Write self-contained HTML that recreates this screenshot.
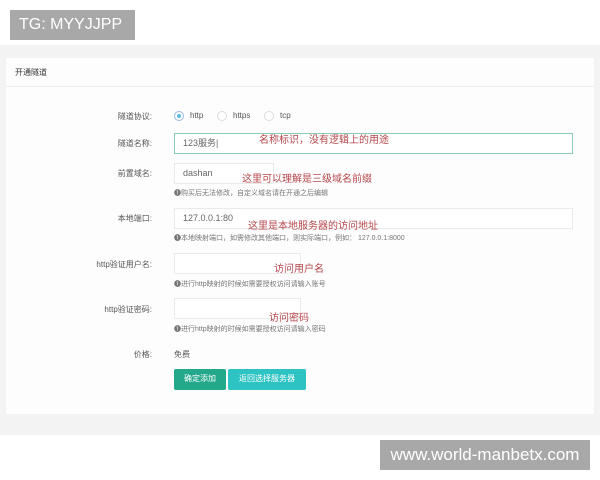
<!DOCTYPE html>
<html><head><meta charset="utf-8"><style>
*{margin:0;padding:0;box-sizing:border-box}
body{width:600px;height:480px;background:#fff;position:relative;overflow:hidden;font-family:"Liberation Sans","Noto Sans CJK SC",sans-serif;color:#555}
.a{position:absolute;white-space:nowrap}
.band{left:0;top:45px;width:600px;height:390px;background:#f3f3f3}
.panel{left:6px;top:58px;width:588px;height:356px;background:#fdfdfd}
.lbl{font-size:8px;color:#555;text-align:right;width:120px;left:32px}
.in{border:1px solid #eaeaea;background:#fff;font-size:9px;color:#666;padding-left:8px;line-height:19px}
.help{font-size:7px;color:#777;left:174px}
.red{color:#b5474b;font-size:10px}
.r{width:10px;height:10px;border:1px solid #ddd;border-radius:50%;background:#fff}
.btn{color:#fff;font-size:8px;text-align:center;line-height:20px;height:21px;top:369px;border-radius:2px}
</style></head><body>
<div class="a" style="left:10px;top:10px;width:125px;height:30px;background:#a8a8a8;color:#fff;font-size:16px;line-height:30px;padding-left:9px">TG: MYYJJPP</div>
<div class="a band"></div>
<div class="a panel"></div>
<div class="a" style="left:6px;top:86px;width:588px;height:1px;background:#ececec"></div>
<div class="a" style="left:15px;top:67px;font-size:8px;color:#333">开通隧道</div>

<div class="a lbl" style="top:111px">隧道协议:</div>
<div class="a r" style="left:174px;top:111px;border-color:#9bd;"><div style="margin:2px;width:4px;height:4px;border-radius:50%;background:#5bc0de"></div></div>
<div class="a" style="left:190px;top:111px;font-size:8px">http</div>
<div class="a r" style="left:217px;top:111px"></div>
<div class="a" style="left:233px;top:111px;font-size:8px">https</div>
<div class="a r" style="left:264px;top:111px"></div>
<div class="a" style="left:280px;top:111px;font-size:8px">tcp</div>

<div class="a lbl" style="top:138px">隧道名称:</div>
<div class="a in" style="left:174px;top:133px;width:399px;height:21px;border-color:#8ccbb5">123服务|</div>
<div class="a red" style="left:259px;top:131px">名称标识，没有逻辑上的用途</div>

<div class="a lbl" style="top:168px">前置域名:</div>
<div class="a in" style="left:174px;top:163px;width:100px;height:21px">dashan</div>
<div class="a red" style="left:242px;top:170px">这里可以理解是三级域名前缀</div>
<div class="a help" style="top:188px">❶购买后无法修改，自定义域名请在开通之后编辑</div>

<div class="a lbl" style="top:213px">本地端口:</div>
<div class="a in" style="left:174px;top:208px;width:399px;height:21px">127.0.0.1:80</div>
<div class="a red" style="left:248px;top:217px">这里是本地服务器的访问地址</div>
<div class="a help" style="top:233px">❶本地映射端口，如需修改其他端口，则实际端口，例如：&nbsp;127.0.0.1:8000</div>

<div class="a lbl" style="top:259px">http验证用户名:</div>
<div class="a in" style="left:174px;top:253px;width:127px;height:21px"></div>
<div class="a red" style="left:274px;top:260px">访问用户名</div>
<div class="a help" style="top:279px">❶进行http映射的时候如需要授权访问请输入账号</div>

<div class="a lbl" style="top:304px">http验证密码:</div>
<div class="a in" style="left:174px;top:298px;width:127px;height:21px"></div>
<div class="a red" style="left:269px;top:309px">访问密码</div>
<div class="a help" style="top:324px">❶进行http映射的时候如需要授权访问请输入密码</div>

<div class="a lbl" style="top:349px">价格:</div>
<div class="a" style="left:174px;top:349px;font-size:8px">免费</div>

<div class="a btn" style="left:174px;width:52px;background:#23a88b">确定添加</div>
<div class="a btn" style="left:228px;width:78px;background:#2ec3c3">返回选择服务器</div>

<div class="a" style="left:380px;top:440px;width:210px;height:30px;background:#a8a8a8;color:#fff;font-size:17px;line-height:30px;text-align:center">www.world-manbetx.com</div>
</body></html>
